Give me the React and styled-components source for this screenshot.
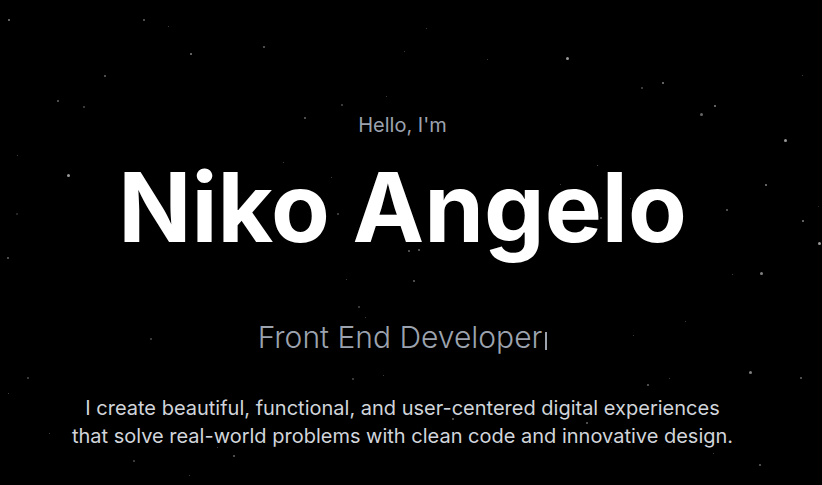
import React from 'react'
import styled, { createGlobalStyle } from 'styled-components'

const GlobalStyle = createGlobalStyle`
    html, body {
        margin: 0;
        padding: 0;
        background: #000;
    }
    body {
        font-family: Inter, "Noto Sans", "Liberation Sans", sans-serif;
        -webkit-font-smoothing: antialiased;
    }
`

// star field: [x, y, size, opacity]
const stars = [
    [8, 19, 2, 0.5], [143, 19, 2, 0.4], [168, 26, 1, 0.3], [190, 53, 2, 0.5],
    [263, 46, 2, 0.4], [104, 75, 2, 0.4], [57, 100, 2, 0.4], [83, 106, 2, 0.3],
    [426, 28, 1, 0.3], [404, 51, 1, 0.3], [487, 59, 1, 0.3], [566, 57, 3, 0.6],
    [662, 82, 2, 0.5], [641, 87, 2, 0.3], [714, 105, 2, 0.5], [700, 113, 3, 0.4],
    [341, 104, 2, 0.3], [304, 117, 2, 0.4], [386, 96, 1, 0.3], [802, 75, 1, 0.3],
    [17, 155, 1, 0.3], [67, 174, 3, 0.6], [16, 213, 2, 0.2], [7, 257, 2, 0.4],
    [784, 139, 3, 0.6], [765, 184, 2, 0.5], [726, 209, 2, 0.4], [802, 220, 2, 0.5],
    [818, 242, 3, 0.6], [818, 206, 1, 0.2],
    [283, 162, 1, 0.3], [331, 177, 1, 0.3], [337, 213, 2, 0.3], [408, 250, 2, 0.4],
    [418, 249, 2, 0.4], [560, 184, 1, 0.3], [597, 165, 1, 0.4], [600, 217, 2, 0.4],
    [630, 198, 1, 0.3],
    [760, 272, 3, 0.5], [732, 274, 1, 0.3], [413, 280, 2, 0.4], [346, 279, 1, 0.3],
    [358, 306, 2, 0.3], [365, 317, 1, 0.3], [685, 321, 1, 0.3], [150, 338, 2, 0.3],
    [633, 335, 1, 0.3], [749, 371, 3, 0.5], [800, 377, 2, 0.4], [27, 377, 2, 0.3],
    [352, 378, 2, 0.3], [383, 375, 1, 0.3], [647, 384, 2, 0.4], [669, 378, 1, 0.3],
    [8, 393, 1, 0.3], [49, 433, 1, 0.3], [233, 455, 2, 0.4], [133, 460, 2, 0.3],
    [759, 464, 2, 0.4], [713, 453, 1, 0.3], [189, 475, 1, 0.3], [586, 422, 2, 0.4],
    [452, 418, 2, 0.4], [217, 447, 1, 0.3], [611, 442, 1, 0.3],
]

function App() {
    return (
        <>
            <GlobalStyle />
            <Hero>
                <StarField>
                    {stars.map(([x, y, s, o], i) => (
                        <Star key={i} style={{ left: x, top: y, width: s, height: s, opacity: o }} />
                    ))}
                </StarField>
                <Content>
                    <Greeting>Hello, I'm</Greeting>
                    <Name>Niko Angelo</Name>
                    <Role>
                        Front End Developer
                        <Cursor />
                    </Role>
                    <Intro>
                        I create beautiful, functional, and user-centered digital experiences
                        that solve real-world problems with clean code and innovative design.
                    </Intro>
                </Content>
            </Hero>
        </>
    )
}

export default App

const Hero = styled.section`
    position: relative;
    min-height: 485px;
    background: #000;
    overflow: hidden;
`

const StarField = styled.div`
    position: absolute;
    inset: 0;
    pointer-events: none;
`

const Star = styled.span`
    position: absolute;
    border-radius: 50%;
    background: #fff;
`

const Content = styled.div`
    position: relative;
    display: flex;
    flex-direction: column;
    align-items: center;
    text-align: center;
    padding: 111px 17px 0 0;
`

const Greeting = styled.p`
    margin: 0;
    font-size: 20px;
    line-height: 28px;
    color: #9ca3af;
`

const Name = styled.h1`
    margin: 20px 0 0;
    font-size: 96px;
    line-height: 1;
    font-weight: 700;
    color: #fff;
`

const Role = styled.h2`
    margin: 64px 0 0;
    display: flex;
    align-items: flex-end;
    font-size: 30px;
    line-height: 36px;
    font-weight: 300;
    color: #9ca3af;
`

const Cursor = styled.span`
    display: inline-block;
    width: 2px;
    height: 18px;
    margin: 0 0 5px 3px;
    background: #9ca3af;
`

const Intro = styled.p`
    margin: 39px 0 0;
    max-width: 672px;
    font-size: 20px;
    line-height: 28px;
    color: #d1d5db;
`
